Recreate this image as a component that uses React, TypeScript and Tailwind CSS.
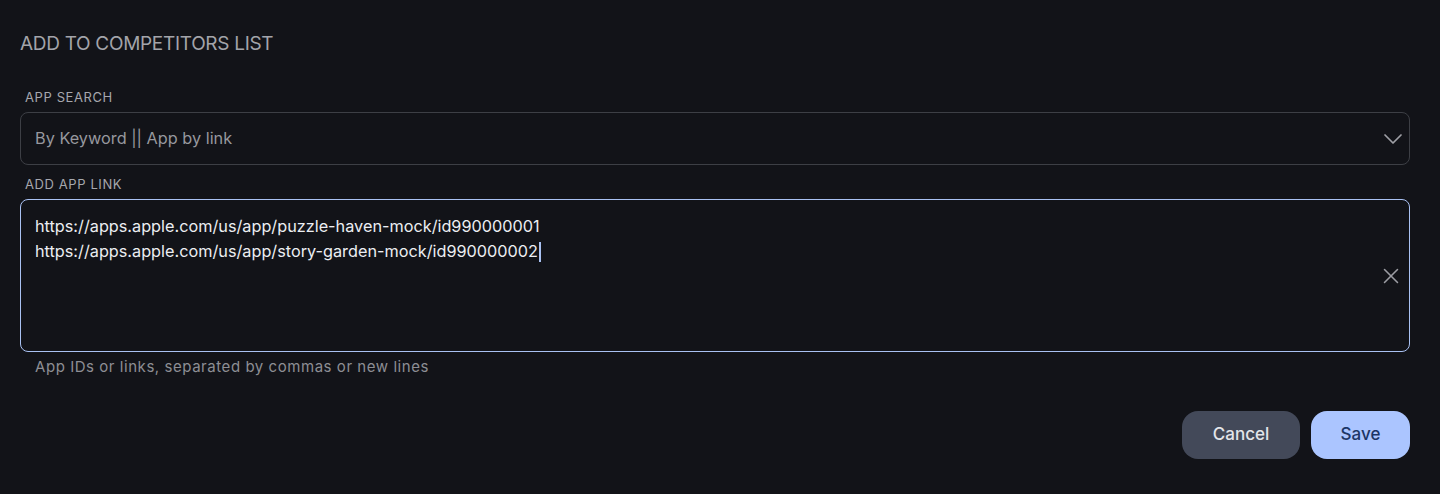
import { ChevronDown, X } from "lucide-react";

const links = [
  "https://apps.apple.com/us/app/puzzle-haven-mock/id990000001",
  "https://apps.apple.com/us/app/story-garden-mock/id990000002",
];

export default function App() {
  return (
    <div className="min-h-[494px] w-full bg-[#121318] pl-5 pr-[30px] pt-[31px] font-['Inter','Noto_Sans',sans-serif]">
      <h2 className="text-[19px] leading-[26px] text-[#a3a4aa] tracking-[-0.3px]">ADD TO COMPETITORS LIST</h2>

      <div className="mt-[32px]">
        <label className="block pl-[5px] text-[13px] leading-[16px] text-[#a6a7ad] tracking-[0.6px]">APP SEARCH</label>
        <div className="mt-[7px] flex h-[53px] items-center justify-between rounded-lg border border-[#3d3f45] pl-[14px]">
          <span className="text-[16.3px] text-[#97989e]">By Keyword || App by link</span>
          <ChevronDown className="h-8 w-8 text-[#9fa0a6]" strokeWidth={1.3} />
        </div>
      </div>

      <div className="mt-[11px]">
        <label className="block pl-[5px] text-[13px] leading-[16px] text-[#a6a7ad] tracking-[0.6px]">ADD APP LINK</label>
        <div className="mt-[7px] flex h-[153px] items-center justify-between rounded-lg border border-[#a9c1f2] pl-[14px] pr-[5px]">
          <div className="self-start pt-[14px] text-[16.25px] leading-[25px] text-[#eceef2]">
            <div>{links[0]}</div>
            <div className="flex items-center">
              {links[1]}
              <span className="ml-px inline-block h-[20px] w-[2px] bg-[#a9c1f2]" />
            </div>
          </div>
          <X className="h-[26px] w-[26px] text-[#9c9da3]" strokeWidth={1.4} />
        </div>
        <p className="mt-[5px] pl-[15px] text-[15px] leading-[20px] text-[#8d8e94] tracking-[0.55px]">App IDs or links, separated by commas or new lines</p>
      </div>

      <div className="mt-[34px] flex justify-end gap-[11px]">
        <button className="h-[48px] w-[118px] rounded-[16px] bg-[#434959] text-[17px] font-medium text-[#e3e5ea]">Cancel</button>
        <button className="h-[48px] w-[99px] rounded-[16px] bg-[#abc5ff] text-[17px] font-medium text-[#1c3566]">Save</button>
      </div>
    </div>
  );
}
